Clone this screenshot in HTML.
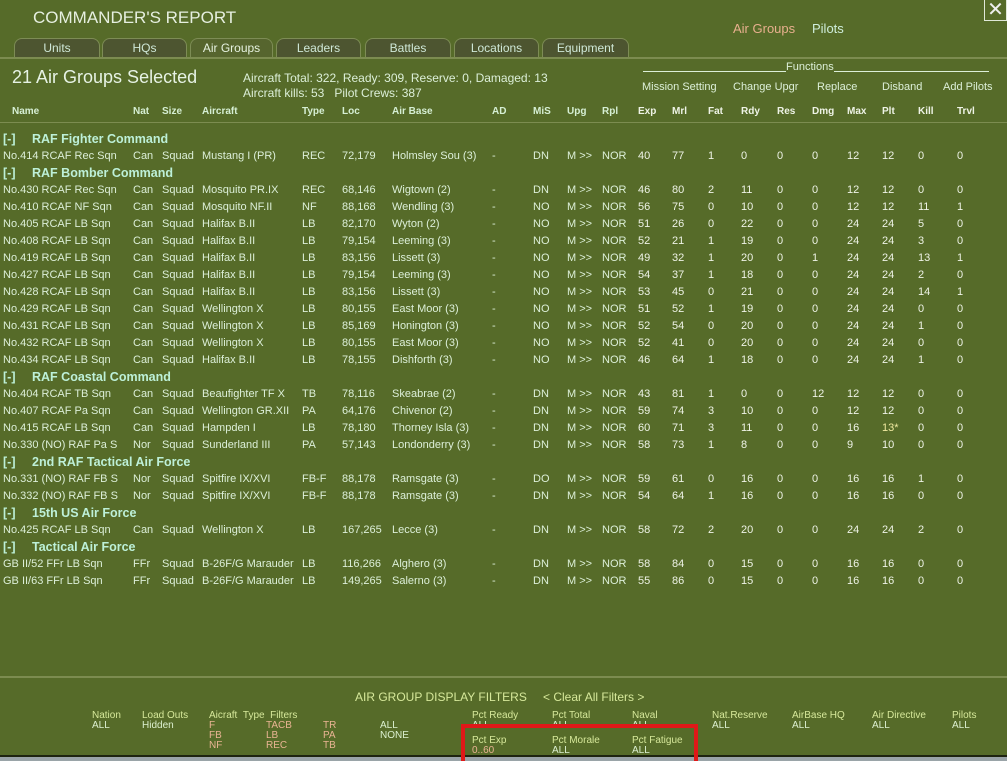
<!DOCTYPE html>
<html><head><meta charset="utf-8"><style>
*{margin:0;padding:0;box-sizing:border-box}
body{width:1007px;height:761px;overflow:hidden;background:#566b29;font-family:"Liberation Sans",sans-serif;font-size:11px;color:#dcefd8;position:relative}
.a{position:absolute;white-space:nowrap}
.tab{position:absolute;top:38px;height:20px;border:1px solid #7d8c55;border-bottom:none;border-radius:8px 8px 0 0;background:#4d5530;color:#cfe8d8;font-size:12px;text-align:center;line-height:19px}
.tab.on{background:#56652e;color:#e6f2e0}
.r{position:absolute;left:0;width:1007px;height:14px;line-height:14px}
.r i{position:absolute;font-style:normal;white-space:nowrap}
.r i:nth-child(1){left:3px}.r i:nth-child(2){left:133px}.r i:nth-child(3){left:162px}.r i:nth-child(4){left:202px}
.r i:nth-child(5){left:302px}.r i:nth-child(6){left:342px}.r i:nth-child(7){left:392px}.r i:nth-child(8){left:492px}
.r i:nth-child(9){left:533px}.r i:nth-child(10){left:567px}.r i:nth-child(11){left:602px}.r i:nth-child(12){left:638px}
.r i:nth-child(13){left:672px}.r i:nth-child(14){left:708px}.r i:nth-child(15){left:741px}.r i:nth-child(16){left:777px}
.r i:nth-child(17){left:812px}.r i:nth-child(18){left:847px}.r i:nth-child(19){left:882px}.r i:nth-child(20){left:918px}.r i:nth-child(21){left:957px}
.r i:nth-child(n+12){color:#eef3e6}
.h{font-weight:bold;font-size:10px;color:#d6efd4}
.g{position:absolute;left:3px;font-weight:bold;font-size:12.5px;color:#bdf0d8;height:16px;line-height:16px}
.g b{display:inline-block;width:29px}
.o{color:#e9b493}.w{color:#dcf0d0}.y{color:#d6e89a}
</style></head><body>
<div class="a" style="left:33px;top:8px;font-size:17px;color:#e6efe0">COMMANDER'S REPORT</div>
<div style="position:absolute;left:984px;top:-1px;width:23px;height:22px;border:1px solid #e0e8d8;color:#eee;font-size:20px;line-height:20px;text-align:center">✕</div>
<div class="a" style="left:733px;top:21px;font-size:13px;color:#e8b08e">Air Groups</div>
<div class="a" style="left:812px;top:21px;font-size:13px;color:#cfeedc">Pilots</div>
<div class="tab" style="left:14px;width:86px">Units</div>
<div class="tab" style="left:102px;width:85px">HQs</div>
<div class="tab on" style="left:190px;width:83px">Air Groups</div>
<div class="tab" style="left:276px;width:85px">Leaders</div>
<div class="tab" style="left:365px;width:86px">Battles</div>
<div class="tab" style="left:454px;width:85px">Locations</div>
<div class="tab" style="left:542px;width:87px">Equipment</div>
<div style="position:absolute;left:0;top:57px;width:1007px;height:2px;background:#7c8c50"></div>
<div class="a" style="left:12px;top:67px;font-size:18px;color:#e6f2e4">21 Air Groups Selected</div>
<div class="a" style="left:243px;top:71px;font-size:12px;color:#dcefd8">Aircraft Total: 322, Ready: 309, Reserve: 0, Damaged: 13</div>
<div class="a" style="left:243px;top:86px;font-size:12px;color:#dcefd8">Aircraft kills: 53 &nbsp; Pilot Crews: 387</div>
<div style="position:absolute;left:643px;top:71px;width:143px;border-top:1px solid #dcefd8"></div>
<div class="a" style="left:786px;top:61px;color:#dcefd8">Functions</div>
<div style="position:absolute;left:834px;top:71px;width:155px;border-top:1px solid #dcefd8"></div>
<div class="a" style="left:642px;top:81px">Mission Setting</div>
<div class="a" style="left:733px;top:81px">Change Upgr</div>
<div class="a" style="left:817px;top:81px">Replace</div>
<div class="a" style="left:882px;top:81px">Disband</div>
<div class="a" style="left:943px;top:81px">Add Pilots</div>
<div class="r h" style="top:105px"><i style="left:12px">Name</i><i>Nat</i><i>Size</i><i>Aircraft</i><i>Type</i><i>Loc</i><i>Air Base</i><i>AD</i><i>MiS</i><i>Upg</i><i>Rpl</i><i>Exp</i><i>Mrl</i><i>Fat</i><i>Rdy</i><i>Res</i><i>Dmg</i><i>Max</i><i>Plt</i><i>Kill</i><i>Trvl</i></div>
<div style="position:absolute;left:0;top:122px;width:1007px;height:1px;background:#7c8c50"></div>

<div class="g" style="top:131px"><b>[-]</b>RAF Fighter Command</div>
<div class="r" style="top:149px"><i>No.414 RCAF Rec Sqn</i><i>Can</i><i>Squad</i><i>Mustang I (PR)</i><i>REC</i><i>72,179</i><i>Holmsley Sou (3)</i><i>-</i><i>DN</i><i>M &gt;&gt;</i><i>NOR</i><i>40</i><i>77</i><i>1</i><i>0</i><i>0</i><i>0</i><i>12</i><i>12</i><i>0</i><i>0</i></div>
<div class="g" style="top:165px"><b>[-]</b>RAF Bomber Command</div>
<div class="r" style="top:183px"><i>No.430 RCAF Rec Sqn</i><i>Can</i><i>Squad</i><i>Mosquito PR.IX</i><i>REC</i><i>68,146</i><i>Wigtown (2)</i><i>-</i><i>DN</i><i>M &gt;&gt;</i><i>NOR</i><i>46</i><i>80</i><i>2</i><i>11</i><i>0</i><i>0</i><i>12</i><i>12</i><i>0</i><i>0</i></div>
<div class="r" style="top:200px"><i>No.410 RCAF NF Sqn</i><i>Can</i><i>Squad</i><i>Mosquito NF.II</i><i>NF</i><i>88,168</i><i>Wendling (3)</i><i>-</i><i>NO</i><i>M &gt;&gt;</i><i>NOR</i><i>56</i><i>75</i><i>0</i><i>10</i><i>0</i><i>0</i><i>12</i><i>12</i><i>11</i><i>1</i></div>
<div class="r" style="top:217px"><i>No.405 RCAF LB Sqn</i><i>Can</i><i>Squad</i><i>Halifax B.II</i><i>LB</i><i>82,170</i><i>Wyton (2)</i><i>-</i><i>NO</i><i>M &gt;&gt;</i><i>NOR</i><i>51</i><i>26</i><i>0</i><i>22</i><i>0</i><i>0</i><i>24</i><i>24</i><i>5</i><i>0</i></div>
<div class="r" style="top:234px"><i>No.408 RCAF LB Sqn</i><i>Can</i><i>Squad</i><i>Halifax B.II</i><i>LB</i><i>79,154</i><i>Leeming (3)</i><i>-</i><i>NO</i><i>M &gt;&gt;</i><i>NOR</i><i>52</i><i>21</i><i>1</i><i>19</i><i>0</i><i>0</i><i>24</i><i>24</i><i>3</i><i>0</i></div>
<div class="r" style="top:251px"><i>No.419 RCAF LB Sqn</i><i>Can</i><i>Squad</i><i>Halifax B.II</i><i>LB</i><i>83,156</i><i>Lissett (3)</i><i>-</i><i>NO</i><i>M &gt;&gt;</i><i>NOR</i><i>49</i><i>32</i><i>1</i><i>20</i><i>0</i><i>1</i><i>24</i><i>24</i><i>13</i><i>1</i></div>
<div class="r" style="top:268px"><i>No.427 RCAF LB Sqn</i><i>Can</i><i>Squad</i><i>Halifax B.II</i><i>LB</i><i>79,154</i><i>Leeming (3)</i><i>-</i><i>NO</i><i>M &gt;&gt;</i><i>NOR</i><i>54</i><i>37</i><i>1</i><i>18</i><i>0</i><i>0</i><i>24</i><i>24</i><i>2</i><i>0</i></div>
<div class="r" style="top:285px"><i>No.428 RCAF LB Sqn</i><i>Can</i><i>Squad</i><i>Halifax B.II</i><i>LB</i><i>83,156</i><i>Lissett (3)</i><i>-</i><i>NO</i><i>M &gt;&gt;</i><i>NOR</i><i>53</i><i>45</i><i>0</i><i>21</i><i>0</i><i>0</i><i>24</i><i>24</i><i>14</i><i>1</i></div>
<div class="r" style="top:302px"><i>No.429 RCAF LB Sqn</i><i>Can</i><i>Squad</i><i>Wellington X</i><i>LB</i><i>80,155</i><i>East Moor (3)</i><i>-</i><i>NO</i><i>M &gt;&gt;</i><i>NOR</i><i>51</i><i>52</i><i>1</i><i>19</i><i>0</i><i>0</i><i>24</i><i>24</i><i>0</i><i>0</i></div>
<div class="r" style="top:319px"><i>No.431 RCAF LB Sqn</i><i>Can</i><i>Squad</i><i>Wellington X</i><i>LB</i><i>85,169</i><i>Honington (3)</i><i>-</i><i>NO</i><i>M &gt;&gt;</i><i>NOR</i><i>52</i><i>54</i><i>0</i><i>20</i><i>0</i><i>0</i><i>24</i><i>24</i><i>1</i><i>0</i></div>
<div class="r" style="top:336px"><i>No.432 RCAF LB Sqn</i><i>Can</i><i>Squad</i><i>Wellington X</i><i>LB</i><i>80,155</i><i>East Moor (3)</i><i>-</i><i>NO</i><i>M &gt;&gt;</i><i>NOR</i><i>52</i><i>41</i><i>0</i><i>20</i><i>0</i><i>0</i><i>24</i><i>24</i><i>0</i><i>0</i></div>
<div class="r" style="top:353px"><i>No.434 RCAF LB Sqn</i><i>Can</i><i>Squad</i><i>Halifax B.II</i><i>LB</i><i>78,155</i><i>Dishforth (3)</i><i>-</i><i>NO</i><i>M &gt;&gt;</i><i>NOR</i><i>46</i><i>64</i><i>1</i><i>18</i><i>0</i><i>0</i><i>24</i><i>24</i><i>1</i><i>0</i></div>
<div class="g" style="top:369px"><b>[-]</b>RAF Coastal Command</div>
<div class="r" style="top:387px"><i>No.404 RCAF TB Sqn</i><i>Can</i><i>Squad</i><i>Beaufighter TF X</i><i>TB</i><i>78,116</i><i>Skeabrae (2)</i><i>-</i><i>DN</i><i>M &gt;&gt;</i><i>NOR</i><i>43</i><i>81</i><i>1</i><i>0</i><i>0</i><i>12</i><i>12</i><i>12</i><i>0</i><i>0</i></div>
<div class="r" style="top:404px"><i>No.407 RCAF Pa Sqn</i><i>Can</i><i>Squad</i><i>Wellington GR.XII</i><i>PA</i><i>64,176</i><i>Chivenor (2)</i><i>-</i><i>DN</i><i>M &gt;&gt;</i><i>NOR</i><i>59</i><i>74</i><i>3</i><i>10</i><i>0</i><i>0</i><i>12</i><i>12</i><i>0</i><i>0</i></div>
<div class="r" style="top:421px"><i>No.415 RCAF LB Sqn</i><i>Can</i><i>Squad</i><i>Hampden I</i><i>LB</i><i>78,180</i><i>Thorney Isla (3)</i><i>-</i><i>DN</i><i>M &gt;&gt;</i><i>NOR</i><i>60</i><i>71</i><i>3</i><i>11</i><i>0</i><i>0</i><i>16</i><i style="color:#f0eaa0">13*</i><i>0</i><i>0</i></div>
<div class="r" style="top:438px"><i>No.330 (NO) RAF Pa S</i><i>Nor</i><i>Squad</i><i>Sunderland III</i><i>PA</i><i>57,143</i><i>Londonderry (3)</i><i>-</i><i>DN</i><i>M &gt;&gt;</i><i>NOR</i><i>58</i><i>73</i><i>1</i><i>8</i><i>0</i><i>0</i><i>9</i><i>10</i><i>0</i><i>0</i></div>
<div class="g" style="top:454px"><b>[-]</b>2nd RAF Tactical Air Force</div>
<div class="r" style="top:472px"><i>No.331 (NO) RAF FB S</i><i>Nor</i><i>Squad</i><i>Spitfire IX/XVI</i><i>FB-F</i><i>88,178</i><i>Ramsgate (3)</i><i>-</i><i>DO</i><i>M &gt;&gt;</i><i>NOR</i><i>59</i><i>61</i><i>0</i><i>16</i><i>0</i><i>0</i><i>16</i><i>16</i><i>1</i><i>0</i></div>
<div class="r" style="top:489px"><i>No.332 (NO) RAF FB S</i><i>Nor</i><i>Squad</i><i>Spitfire IX/XVI</i><i>FB-F</i><i>88,178</i><i>Ramsgate (3)</i><i>-</i><i>DN</i><i>M &gt;&gt;</i><i>NOR</i><i>54</i><i>64</i><i>1</i><i>16</i><i>0</i><i>0</i><i>16</i><i>16</i><i>0</i><i>0</i></div>
<div class="g" style="top:505px"><b>[-]</b>15th US Air Force</div>
<div class="r" style="top:523px"><i>No.425 RCAF LB Sqn</i><i>Can</i><i>Squad</i><i>Wellington X</i><i>LB</i><i>167,265</i><i>Lecce (3)</i><i>-</i><i>DN</i><i>M &gt;&gt;</i><i>NOR</i><i>58</i><i>72</i><i>2</i><i>20</i><i>0</i><i>0</i><i>24</i><i>24</i><i>2</i><i>0</i></div>
<div class="g" style="top:539px"><b>[-]</b>Tactical Air Force</div>
<div class="r" style="top:557px"><i>GB II/52 FFr LB Sqn</i><i>FFr</i><i>Squad</i><i>B-26F/G Marauder</i><i>LB</i><i>116,266</i><i>Alghero (3)</i><i>-</i><i>DN</i><i>M &gt;&gt;</i><i>NOR</i><i>58</i><i>84</i><i>0</i><i>15</i><i>0</i><i>0</i><i>16</i><i>16</i><i>0</i><i>0</i></div>
<div class="r" style="top:574px"><i>GB II/63 FFr LB Sqn</i><i>FFr</i><i>Squad</i><i>B-26F/G Marauder</i><i>LB</i><i>149,265</i><i>Salerno (3)</i><i>-</i><i>DN</i><i>M &gt;&gt;</i><i>NOR</i><i>55</i><i>86</i><i>0</i><i>15</i><i>0</i><i>0</i><i>16</i><i>16</i><i>0</i><i>0</i></div>

<div style="position:absolute;left:0;top:676px;width:1007px;height:2px;background:#7c8c50"></div>
<div class="a y" style="left:355px;top:690px;font-size:12px">AIR GROUP DISPLAY FILTERS</div>
<div class="a y" style="left:543px;top:690px;font-size:12px">&lt; Clear All Filters &gt;</div>
<div style="font-size:10px;line-height:10px">
<div class="a y" style="left:92px;top:711px">Nation</div><div class="a w" style="left:92px;top:721px">ALL</div>
<div class="a y" style="left:142px;top:711px">Load Outs</div><div class="a w" style="left:142px;top:721px">Hidden</div>
<div class="a y" style="left:209px;top:711px">Aicraft &nbsp;Type &nbsp;Filters</div>
<div class="a o" style="left:209px;top:721px">F<br>FB<br>NF</div>
<div class="a o" style="left:266px;top:721px">TACB<br>LB<br>REC</div>
<div class="a o" style="left:323px;top:721px">TR<br>PA<br>TB</div>
<div class="a w" style="left:380px;top:721px">ALL<br>NONE</div>
<div class="a y" style="left:472px;top:711px">Pct Ready</div><div class="a w" style="left:472px;top:721px;height:5px;overflow:hidden">ALL</div>
<div class="a y" style="left:552px;top:711px">Pct Total</div><div class="a w" style="left:552px;top:721px;height:5px;overflow:hidden">ALL</div>
<div class="a y" style="left:632px;top:711px">Naval</div><div class="a w" style="left:632px;top:721px;height:5px;overflow:hidden">ALL</div>
<div class="a y" style="left:712px;top:711px">Nat.Reserve</div><div class="a w" style="left:712px;top:721px">ALL</div>
<div class="a y" style="left:792px;top:711px">AirBase HQ</div><div class="a w" style="left:792px;top:721px">ALL</div>
<div class="a y" style="left:872px;top:711px">Air Directive</div><div class="a w" style="left:872px;top:721px">ALL</div>
<div class="a y" style="left:952px;top:711px">Pilots</div><div class="a w" style="left:952px;top:721px">ALL</div>
<div class="a y" style="left:472px;top:736px">Pct Exp</div><div class="a o" style="left:472px;top:746px">0..60</div>
<div class="a y" style="left:552px;top:736px">Pct Morale</div><div class="a w" style="left:552px;top:746px">ALL</div>
<div class="a y" style="left:632px;top:736px">Pct Fatigue</div><div class="a w" style="left:632px;top:746px">ALL</div>
</div>
<div style="position:absolute;left:0;top:755px;width:1007px;height:2px;background:#1e2410"></div>
<div style="position:absolute;left:0;top:757px;width:1007px;height:4px;background:#9aa4a8"></div>
<div style="position:absolute;left:461px;top:724px;width:237px;height:37px;border:4px solid #e01818;border-bottom:none"></div>
</body></html>
